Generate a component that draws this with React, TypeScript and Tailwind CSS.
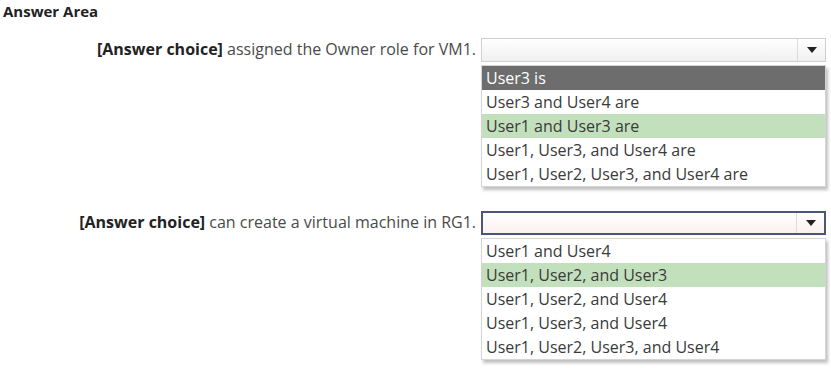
import React from 'react';

type Question = {
  rest: string;
  options: string[];
  selected: number;
  focused: boolean;
  highlight?: number;
};

const questions: Question[] = [
  {
    rest: 'assigned the Owner role for VM1.',
    options: [
      'User3 is',
      'User3 and User4 are',
      'User1 and User3 are',
      'User1, User3, and User4 are',
      'User1, User2, User3, and User4 are',
    ],
    selected: 2,
    focused: false,
    highlight: 0,
  },
  {
    rest: 'can create a virtual machine in RG1.',
    options: [
      'User1 and User4',
      'User1, User2, and User3',
      'User1, User2, and User4',
      'User1, User3, and User4',
      'User1, User2, User3, and User4',
    ],
    selected: 1,
    focused: true,
  },
];

function Arrow() {
  return (
    <svg width="10" height="6" viewBox="0 0 10 6">
      <path d="M0 0 L10 0 L5 6 Z" fill="#222" />
    </svg>
  );
}

function Dropdown({ q }: { q: Question }) {
  return (
    <div className="flex flex-col w-[345px]">
      {/* Closed select */}
      <div
        className={
          q.focused
            ? 'flex h-[24px] border-2 border-[#4d5578] bg-gradient-to-b from-white to-[#fbf1ef]'
            : 'flex h-[24px] border border-[#cfcfcf] bg-gradient-to-b from-white to-[#f0f0f0]'
        }
      >
        <div className="flex-1" />
        <div className="w-[28px] flex items-center justify-center border-l border-[#dcdcdc]">
          <Arrow />
        </div>
      </div>
      {/* Open list */}
      <div className="mt-[3px] border border-[#d4d4d4] bg-white shadow-[2px_3px_3px_rgba(0,0,0,0.25)]">
        {q.options.map((opt, i) => (
          <div
            key={opt}
            className={
              i === q.highlight
                ? 'h-[24px] px-[4px] leading-[24px] bg-[#6d6d6d] text-white'
                : i === q.selected
                ? 'h-[24px] px-[4px] leading-[24px] bg-[#c3e0bd] text-[#3a3a3a]'
                : 'h-[24px] px-[4px] leading-[24px] text-[#3a3a3a]'
            }
          >
            {opt}
          </div>
        ))}
      </div>
    </div>
  );
}

export default function App() {
  return (
    <div
      className="w-[831px] h-[368px] bg-white overflow-hidden text-[16px] text-[#4a4a4a]"
      style={{ fontFamily: '"Open Sans", "Noto Sans", sans-serif' }}
    >
      <div className="pl-[3px] pt-[1px] font-bold text-[15px] leading-[20px] text-[#222]">Answer Area</div>

      <div className="mt-[17px] flex flex-col gap-[24px]">
        {questions.map((q, idx) => (
          <div key={idx} className="flex items-start">
            <div className="w-[477px] pr-[1px] text-right leading-[22px]">
              <span className="font-bold text-[#222]">[Answer choice]</span> {q.rest}
            </div>
            <div className="ml-[4px]">
              <Dropdown q={q} />
            </div>
          </div>
        ))}
      </div>
    </div>
  );
}
